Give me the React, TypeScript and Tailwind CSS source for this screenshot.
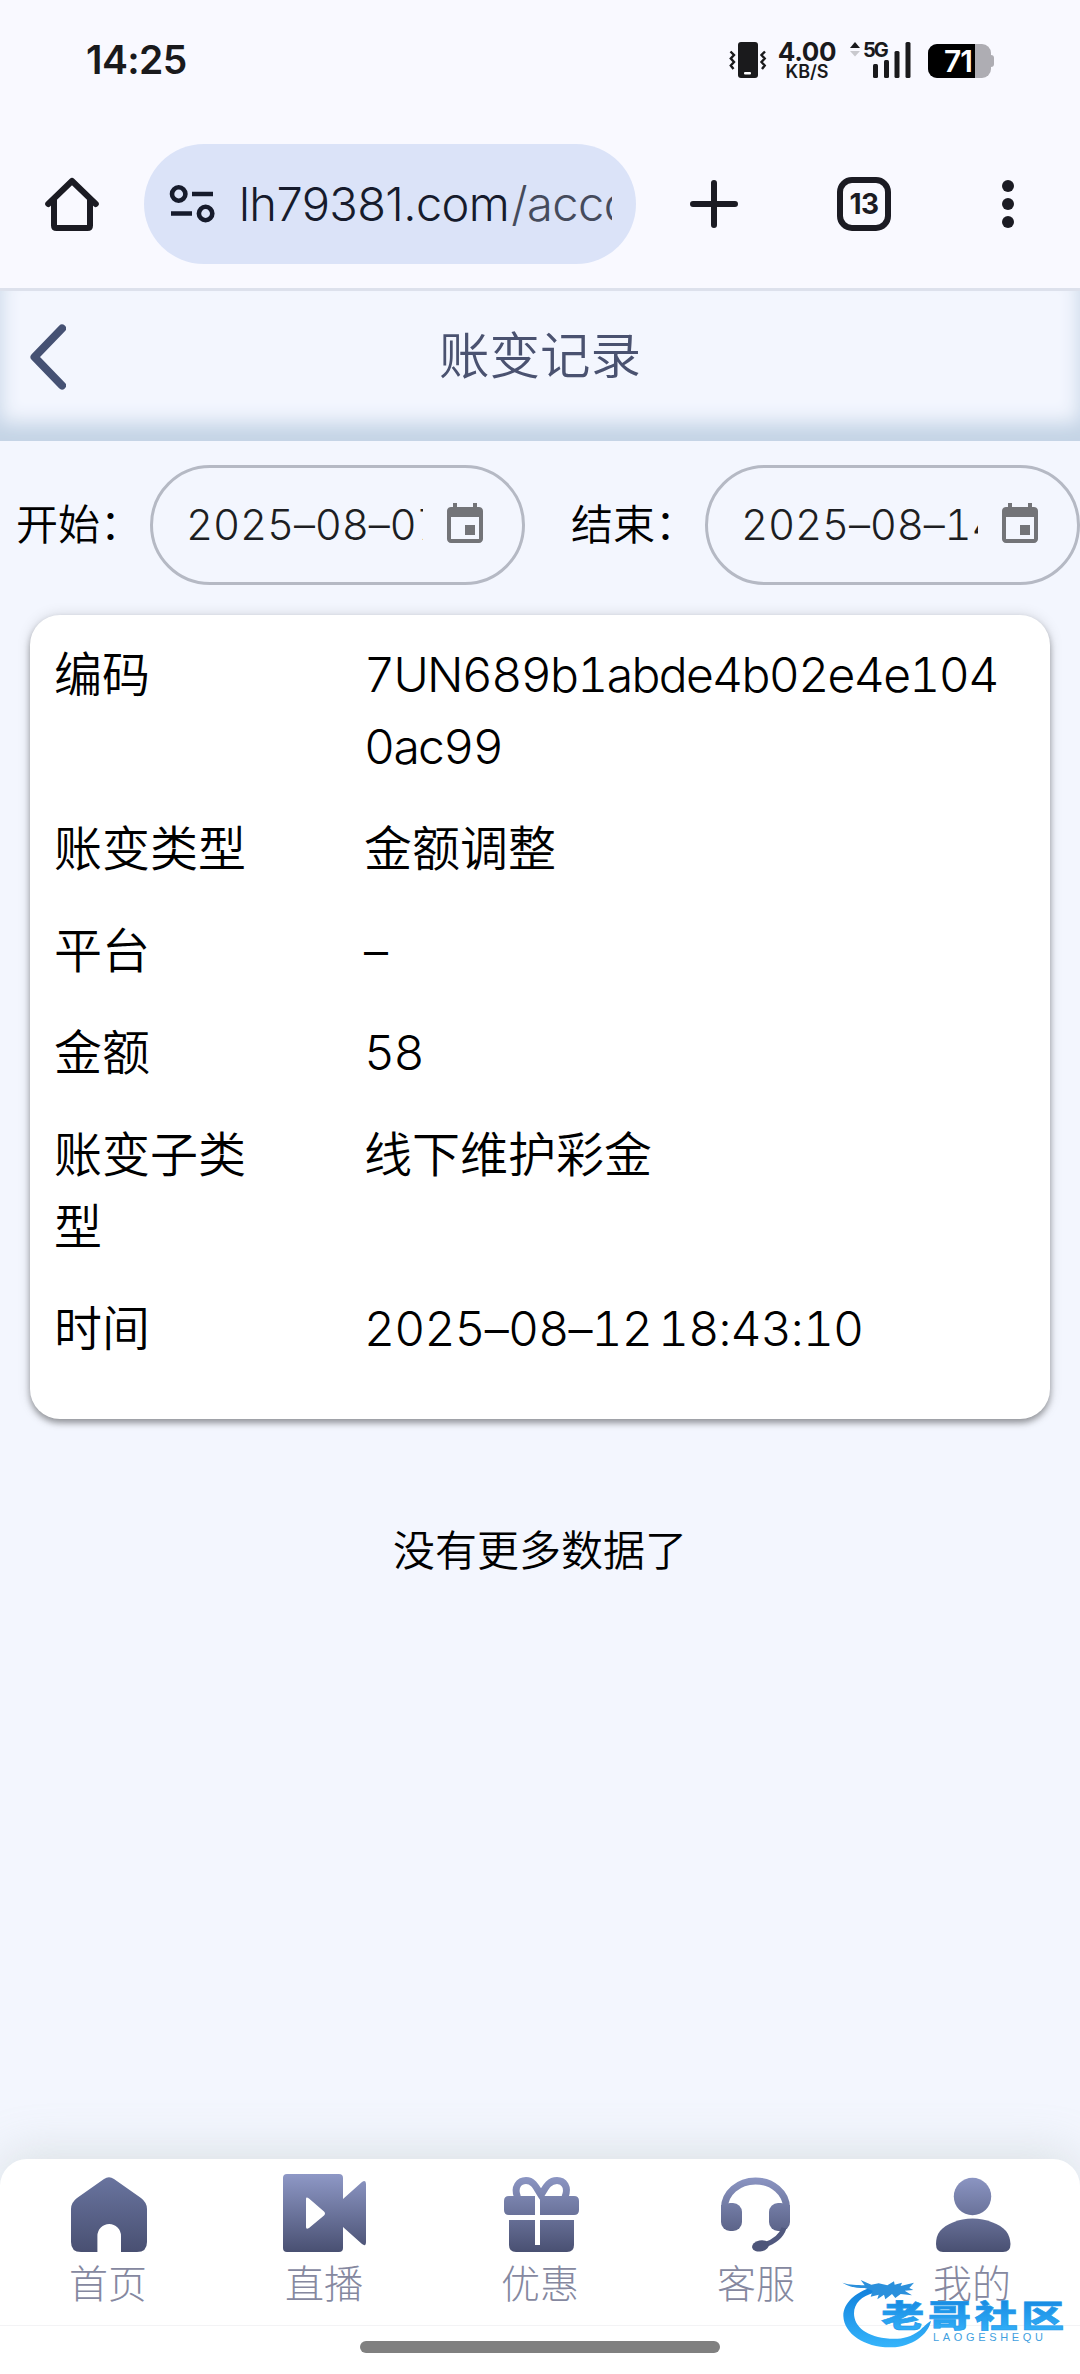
import type { ReactNode } from 'react'

const records = [
  { label: '编码', value: '7UN689b1abde4b02e4e1040ac99', tracking: 'tracking-[-1.65px]' },
  { label: '账变类型', value: '金额调整', tracking: 'tracking-normal' },
  { label: '平台', value: '–', tracking: 'tracking-normal' },
  { label: '金额', value: '58', tracking: 'tracking-[-1.6px]' },
  { label: '账变子类型', value: '线下维护彩金', tracking: 'tracking-normal' },
  { label: '时间', value: '2025–08–12 18:43:10', tracking: 'tracking-[-0.85px] [word-spacing:-6px]' },
]

function StatusBar() {
  return (
    <div className="flex h-[118px] items-center justify-between pl-[86px] pr-[86px] text-[#1a1a1c]">
      <span className="text-[39px] leading-none font-semibold tracking-[-0.6px]">14:25</span>
      <div className="mt-0.5 flex h-9 items-start">
        <svg className="h-9 w-[38px]" viewBox="0 0 38 36" fill="none">
          <rect x="9" width="20" height="36" rx="3" fill="#1a1a1c" />
          <rect x="15" y="30" width="7" height="2.4" rx="1" fill="#fff" />
          <path
            d="M1.5 9.5L5 13L1.8 16.5L5 20L1.8 23.5L4.5 27M36 9.5L32.5 13L35.7 16.5L32.5 20L35.7 23.5L33 27"
            stroke="#1a1a1c"
            strokeWidth="2.4"
          />
        </svg>
        <div className="ml-[10px] flex w-[60px] flex-col items-center">
          <span className="text-[26px] leading-[20px] font-bold tracking-[-0.3px]">4.00</span>
          <span className="mt-px text-[18px] leading-[18px] font-semibold">KB/S</span>
        </div>
        <svg className="ml-[12px] h-9 w-3" viewBox="0 0 12 36">
          <path d="M1 6L6 0L11 6Z" fill="#1a1a1c" />
          <path d="M1 9L6 14.5L11 9Z" fill="#c9c9ce" />
        </svg>
        <div className="relative h-9 w-[50px]">
          <span className="absolute top-0 left-[2px] text-[20px] leading-4 font-bold tracking-[-2px]">5G</span>
          <svg className="h-9 w-[50px]" viewBox="0 0 50 36" fill="#1a1a1c">
            <rect x="12" y="22" width="5" height="14" rx="1.5" />
            <rect x="23" y="18" width="5" height="18" rx="1.5" />
            <rect x="33.5" y="9" width="5" height="27" rx="1.5" />
            <rect x="44.5" y="0" width="5" height="36" rx="1.5" />
          </svg>
        </div>
        <div className="mt-0.5 ml-[17px] flex items-center">
          <div className="flex h-[34px] w-[63px] overflow-hidden rounded-[9px] bg-[#aeadb3]">
            <div className="flex w-[47px] items-center justify-end bg-black pr-[3px] text-[30px] leading-none font-semibold tracking-[-1px] text-white">
              71
            </div>
          </div>
          <div className="h-3 w-[3px] rounded-r bg-[#aeadb3]" />
        </div>
      </div>
    </div>
  )
}

function BrowserBar() {
  return (
    <div className="flex h-[170px] items-center pt-0.5 pl-[45px] text-[#1b1b23]">
      <svg className="size-[54px]" viewBox="0 0 54 54" fill="none" stroke="currentColor" strokeWidth="6">
        <path d="M3.2 27L27 4L50.8 27" strokeLinecap="round" strokeLinejoin="round" />
        <path d="M9 22V48.5Q9 51 11.500 51H42.500Q45 51 45 48.500V22" />
      </svg>
      <div className="ml-[45px] flex h-[120px] w-[492px] items-center rounded-full bg-[#dbe3f8] pl-6 text-[#161b2c]">
        <svg className="size-12 shrink-0" viewBox="0 0 48 48" fill="none" stroke="currentColor" strokeWidth="4.600">
          <circle cx="10.700" cy="14" r="6.700" />
          <path d="M24 14H45M3 33.500H24" />
          <circle cx="37.600" cy="33.500" r="6.700" />
        </svg>
        <div className="ml-[23px] w-[373px] overflow-hidden text-[47px] leading-[64px] font-[350] tracking-[-0.6px] whitespace-nowrap">
          lh79381.com<span className="ml-0.5 text-[#454b5c]">/account</span>
        </div>
        <div className="w-6 shrink-0" />
      </div>
      <svg className="ml-[54px] size-12" viewBox="0 0 48 48" stroke="currentColor" strokeWidth="6" strokeLinecap="round">
        <path d="M24 3V45M3 24H45" />
      </svg>
      <div className="ml-[99px] flex size-[54px] items-center justify-center rounded-[15px] border-6 border-current text-[28px] leading-none font-bold tracking-[-0.5px]">
        13
      </div>
      <svg className="ml-[111px] h-12 w-3" viewBox="0 0 12 48" fill="currentColor">
        <circle cx="6" cy="6" r="6" />
        <circle cx="6" cy="24" r="6" />
        <circle cx="6" cy="42" r="6" />
      </svg>
    </div>
  )
}

function PageHeader() {
  return (
    <header className="relative flex h-[153px] items-center justify-center border-t-3 border-[#dde1ec] bg-[#f3f6fe] pb-[19px] shadow-[inset_0_-18px_20px_#c3d3e5]">
      <svg
        className="absolute top-[33px] left-[30px] h-[66px] w-9"
        viewBox="0 0 36 66"
        fill="none"
        stroke="#455173"
        strokeWidth="8"
        strokeLinecap="round"
        strokeLinejoin="round"
      >
        <path d="M32 4.500L4.500 33L32 61.500" />
      </svg>
      <h1 className="text-[50.5px] leading-none font-[350] text-[#4a5270]">账变记录</h1>
    </header>
  )
}

function DateField({ label, value }: { label: string; value: string }) {
  return (
    <div className="flex w-[540px] shrink-0 items-center">
      <span className="w-[135px] shrink-0 pl-px text-[42px] leading-none">{label}：</span>
      <div className="flex h-[120px] w-[375px] items-center rounded-full border-3 border-[#b5b9c4] pl-[33px] text-[#1d1e22]">
        <span className="w-[237px] overflow-hidden text-[42px] leading-[54px] tracking-[-0.2px] whitespace-nowrap tabular-nums">
          {value}
        </span>
        <svg className="ml-[18px] size-12 shrink-0" viewBox="0 0 24 24" fill="#737478">
          <path d="M17 12h-5v5h5v-5zM16 1v2H8V1H6v2H5c-1.110 0-1.990.9-1.990 2L3 19c0 1.100.89 2 2 2h14c1.100 0 2-.9 2-2V5c0-1.100-.9-2-2-2h-1V1h-2zm3 18H5V8h14v11z" />
        </svg>
      </div>
    </div>
  )
}

function RecordCard() {
  return (
    <div className="mx-[30px] rounded-[30px] bg-white px-6 pt-[9px] pb-[39px] text-[48px] leading-[72px] shadow-[0_4px_6px_rgba(0,0,0,0.35),0_0_14px_rgba(0,0,0,0.13)]">
      {records.map((r) => (
        <div key={r.label} className="flex py-[15px]">
          <div className="mr-[94px] w-[216px] shrink-0">{r.label}</div>
          <div className={`w-[645px] break-all tabular-nums ${r.tracking}`}>{r.value}</div>
        </div>
      ))}
    </div>
  )
}

function TabItem({ label, children }: { label: string; children: ReactNode }) {
  return (
    <div className="flex w-[216px] flex-col items-center pt-[15px]">
      <svg className="h-[78px] w-[84px]" viewBox="0 0 84 78" fill="url(#tab-fill)">
        {children}
      </svg>
      <span className="mt-3 text-[39px] leading-[39px] font-light text-[#85889f]">{label}</span>
    </div>
  )
}

function TabBar() {
  return (
    <nav className="mt-auto flex h-[166px] rounded-t-[27px] bg-white shadow-[0_-6px_48px_rgba(160,175,165,0.3)]">
      <svg className="absolute size-0">
        <defs>
          <linearGradient id="tab-fill" gradientUnits="userSpaceOnUse" x1="0" y1="0" x2="0" y2="78">
            <stop offset="0" stopColor="#8e98c6" />
            <stop offset="1" stopColor="#495072" />
          </linearGradient>
          <linearGradient id="home-fill" gradientUnits="userSpaceOnUse" x1="0" y1="0" x2="0" y2="78">
            <stop offset="0" stopColor="#6a75a0" />
            <stop offset="1" stopColor="#495072" />
          </linearGradient>
        </defs>
      </svg>
      <TabItem label="首页">
        <path
          fill="url(#home-fill)"
          d="M38 5Q43 1.500 48 5L75 24Q81 28.500 81 35V68Q81 78 71 78H55V62A11.800 12 0 0 0 31.400 62V78H15Q5 78 5 68V35Q5 28.500 11 24Z"
        />
      </TabItem>
      <TabItem label="直播">
        <path
          fillRule="evenodd"
          d="M5 0H57Q61 0 61 4V25L80 8Q84 5.500 84 10V68Q84 73 80 70L61 53V74Q61 78 57 78H5Q1 78 1 74V4Q1 0 5 0ZM24 25V53Q24 56 27 54L42 41.500Q44 39.500 42 37.500L27 24.500Q24 22.500 24 25Z"
        />
      </TabItem>
      <TabItem label="优惠">
        <path
          d="M19.500 23C15.500 13 21 6.500 28 6.500C36 6.500 39 15 43 21C47 15 50 6.500 59 6.500C66 6.500 71 13 67 23"
          fill="none"
          stroke="url(#tab-fill)"
          strokeWidth="7"
        />
        <path d="M11 22H37V41H11Q6 41 6 36V27Q6 22 11 22ZM42 22H76Q81 22 81 27V36Q81 41 76 41H42Z" />
        <path d="M11 46H37V71H42V46H76V71Q76 78 69 78H18Q11 78 11 71Z" />
      </TabItem>
      <TabItem label="客服">
        <path d="M10.500 35V34A31 27 0 0 1 72.500 34V35" fill="none" stroke="url(#tab-fill)" strokeWidth="7" />
        <rect x="7" y="29" width="21" height="28" rx="9" />
        <rect x="55" y="29" width="21" height="28" rx="9" />
        <path d="M7 31H15V48H7ZM68 31H76V48H68Z" />
        <path d="M70 54Q66 66 50 71" fill="none" stroke="#50587e" strokeWidth="5" />
        <ellipse cx="46.500" cy="72" rx="8.500" ry="5.500" transform="rotate(-12 46 72)" fill="#4d5579" />
      </TabItem>
      <TabItem label="我的">
        <circle cx="42.500" cy="22.500" r="18.700" />
        <path d="M42.500 44.500C56 44.500 70 50 76 57Q80 62 80.500 70Q80.500 78 73 78H13Q6 78 6 70Q6 62 10 57C16 50 29 44.500 42.500 44.500Z" />
      </TabItem>
    </nav>
  )
}

function Watermark() {
  return (
    <svg className="absolute right-0 bottom-0 h-[114px] w-[250px]" viewBox="0 0 750 342">
      <defs>
        <linearGradient id="wm" x1="0" y1="0" x2="0" y2="1">
          <stop offset="0" stopColor="#1180dc" />
          <stop offset="1" stopColor="#35b4fb" />
        </linearGradient>
      </defs>
      <path
        fill="url(#wm)"
        d="M125 82C75 98 40 130 40 168C42 222 105 264 185 262C245 260 295 225 303 182C285 195 275 206 268 212C240 232 215 238 180 236C110 232 72 200 72 160C72 130 95 108 132 98Z"
      />
      <path
        fill="#2b90dc"
        d="M37 68C60 76 80 74 104 76L92 60L124 74L146 70L172 76L192 64L194 74L216 68L212 78L252 68L238 84L250 90L224 92L246 106L212 102L196 114L186 102L166 118L162 104L142 118L146 104L122 110L128 92L104 84C80 84 60 82 37 68Z"
      />
      <g fill="url(#wm)" transform="scale(1.4 1)">
        {['老', '哥', '社', '区'].map((c, i) => (
          <text
            key={c}
            x={156 + i * 100}
            y="200"
            textAnchor="middle"
            fontSize="92"
            fontWeight="900"
            stroke="#259bea"
            strokeWidth="2"
            fontFamily="Noto Sans CJK SC"
          >
            {c}
          </text>
        ))}
      </g>
      <text x="309" y="242" textLength="330" fontSize="33" fontWeight="500" fontFamily="Liberation Sans" fill="#3f9fe0">
        LAOGESHEQU
      </text>
    </svg>
  )
}

export default function App() {
  return (
    <div className="relative flex h-[2374px] w-[1080px] flex-col overflow-hidden bg-[#f3f6fe] font-[Inter,'Noto_Sans_CJK_SC',sans-serif] font-[350] text-black">
      <div className="bg-[#f9f9ff]">
        <StatusBar />
        <BrowserBar />
      </div>
      <PageHeader />
      <div className="flex pt-6 pb-[30px] pl-[15px]">
        <div className="flex w-[555px] shrink-0">
          <DateField label="开始" value="2025–08–07" />
        </div>
        <DateField label="结束" value="2025–08–14" />
      </div>
      <RecordCard />
      <p className="mt-[111px] text-center text-[42px] leading-[42px]">没有更多数据了</p>
      <TabBar />
      <div className="flex h-[49px] shrink-0 justify-center border-t border-[#f3f3f5] bg-white pt-[15px]">
        <div className="h-3 w-[360px] rounded-full bg-[#808080]" />
      </div>
      <Watermark />
    </div>
  )
}
